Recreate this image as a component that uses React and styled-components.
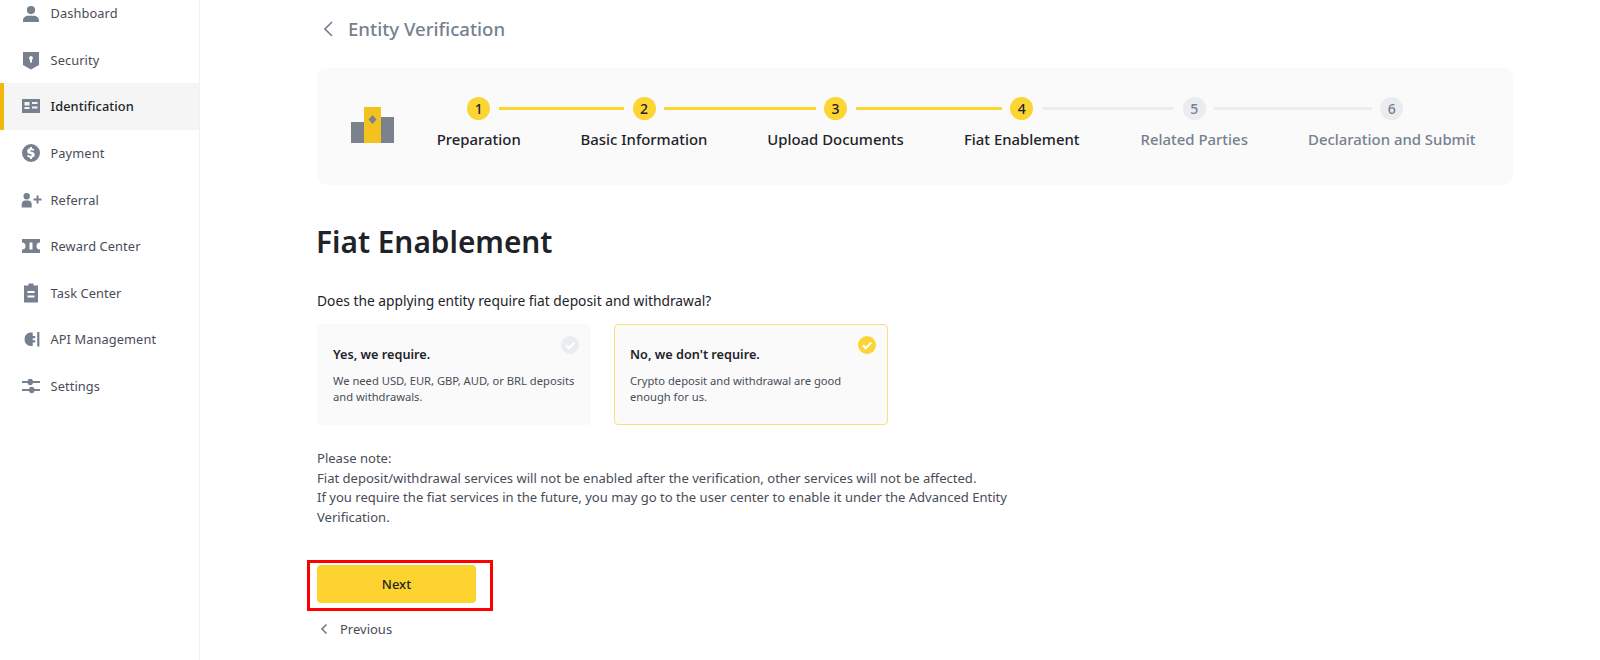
import React from "react";
import styled, { createGlobalStyle } from "styled-components";

const FONT = `"Noto Sans", "Liberation Sans", sans-serif`;

const Global = createGlobalStyle`
  html, body { margin: 0; padding: 0; background: #fff; height: 660px; overflow: hidden; }
  body { font-family: ${FONT}; color: #1e2329; }
  * { box-sizing: border-box; }
`;

const Page = styled.div`
  display: flex;
  width: 1600px;
  height: 660px;
  overflow: hidden;
`;
const Sidebar = styled.nav`
  flex: 0 0 200px;
  height: 660px;
  border-right: 1px solid #f0f1f2;
  overflow: hidden;
`;
const NavList = styled.div`
  margin-top: -10px;
  display: flex;
  flex-direction: column;
`;
const NavItem = styled.div`
  height: 46.6px;
  display: flex;
  align-items: center;
  gap: 7.5px;
  padding-left: ${p => (p.$active ? "15px" : "19px")};
  border-left: ${p => (p.$active ? "4px solid #f0b90b" : "none")};
  background: ${p => (p.$active ? "#f5f5f5" : "transparent")};
  color: ${p => (p.$active ? "#1e2329" : "#474d57")};
  font-size: 12.8px;
  font-weight: ${p => (p.$active ? 500 : 400)};
  letter-spacing: 0.1px;
`;
const NavIcon = styled.svg`
  width: 24px;
  height: 24px;
  flex: none;
  fill: #76808f;
`;
const Main = styled.main`
  flex: 1;
  padding-left: 117px;
  min-width: 0;
`;
const Header = styled.div`
  height: 68px;
  display: flex;
  align-items: flex-start;
  padding-top: 16px;
  gap: 5px;
  color: #76808f;
  font-size: 18.6px;
  font-weight: 500;
  line-height: 26px;
`;
const BackIcon = styled.svg`
  width: ${p => p.$size}px;
  height: ${p => p.$size}px;
  flex: none;
  fill: none;
  stroke: #76808f;
  stroke-width: 1.7;
`;
const Panel = styled.section`
  width: 1196px;
  height: 117px;
  background: #fafafa;
  border-radius: 9px;
  padding: 29px 0 0 34px;
  display: flex;
  align-items: flex-start;
`;
const Logo = styled.svg`
  flex: none;
  width: 43px;
  height: 36px;
  margin: 10px 13px 0 0;
`;
const Steps = styled.div`
  display: grid;
  grid-template-columns: 143.5px 187px 196px 176.5px 168.5px 226.5px;
`;
const Step = styled.div`
  display: flex;
  flex-direction: column;
  align-items: center;
`;
const Track = styled.div`
  width: 100%;
  display: flex;
  align-items: center;
  gap: 8.5px;
`;
const Segment = styled.span`
  flex: 1;
  height: 3px;
  background: ${p => (p.$blank ? "transparent" : p.$on ? "#fcd535" : "#eaecef")};
`;
const Bubble = styled.span`
  flex: none;
  width: 23px;
  height: 23px;
  border-radius: 50%;
  display: flex;
  align-items: center;
  justify-content: center;
  font-size: 14px;
  font-weight: 500;
  background: ${p => (p.$on ? "#fcd535" : "#eaecef")};
  color: ${p => (p.$on ? "#1e2329" : "#76808f")};
`;
const StepLabel = styled.span`
  margin-top: 9px;
  font-size: 14.9px;
  line-height: 20px;
  font-weight: 500;
  white-space: nowrap;
  color: ${p => (p.$on ? "#1e2329" : "#76808f")};
`;
const Title = styled.h1`
  margin: 35px 0 0 -1px;
  font-size: 29.8px;
  line-height: 44px;
  font-weight: 600;
  color: #1e2329;
`;
const Question = styled.p`
  margin: 27px 0 0;
  font-size: 13.8px;
  line-height: 20px;
  color: #1e2329;
`;
const Cards = styled.div`
  margin-top: 13px;
  display: flex;
  gap: 23px;
`;
const Card = styled.div`
  position: relative;
  width: 274px;
  height: 101px;
  padding: 19px 8px 0 15px;
  background: #fafafa;
  border-radius: 4px;
  border: 1px solid ${p => (p.$on ? "#fcdf7a" : "#fafafa")};
`;
const CardTitle = styled.div`
  font-size: 12.7px;
  line-height: 20px;
  font-weight: 600;
  color: #1e2329;
`;
const CardText = styled.div`
  margin-top: 9px;
  font-size: 11.2px;
  line-height: 15.5px;
  color: #474d57;
`;
const CheckBadge = styled.svg`
  position: absolute;
  top: 10.5px;
  right: 11px;
  width: 18px;
  height: 18px;
`;
const Note = styled.div`
  margin-top: 24px;
  width: 690px;
  font-size: 13.05px;
  line-height: 19.7px;
  color: #474d57;
`;
const Annotated = styled.div`
  margin: 32px 0 0 -10px;
  width: 186px;
  height: 51px;
  border: 3px solid #f00;
  padding: 2px 0 0 7px;
`;
const NextButton = styled.button`
  display: block;
  width: 159px;
  height: 38px;
  border: 0;
  border-radius: 4px;
  background: #fdd32f;
  color: #1e2329;
  font: 500 13px ${FONT};
`;
const Previous = styled.div`
  margin-top: 8px;
  display: flex;
  align-items: center;
  gap: 9px;
  height: 20px;
  font-size: 13px;
  color: #474d57;
`;

const nav = [
  ["Dashboard", <path d="M12 5a4 4 0 1 1 0 8.200A4 4 0 0 1 12 5zM4 21v-1.500c0-3 2.500-4.700 5.200-4.700h5.600c2.700 0 5.200 1.700 5.200 4.700V21z" />],
  ["Security", <path fillRule="evenodd" d="M4 4h16v13l-8 4.500L4 17zM12 8a2 2 0 0 0-1 3.700V14.500h2v-2.800A2 2 0 0 0 12 8z" />],
  ["Identification", <path fillRule="evenodd" d="M3 5h18v14H3zM5.500 8v3.500h5V8zM13 8v2h5.500V8zM13 12.500v2h5.500v-2zM5.500 13v2h5v-2z" />],
  ["Payment", <path fillRule="evenodd" d="M12 3a9 9 0 1 1 0 18 9 9 0 0 1 0-18zM11 6v1.300c-1.700.3-2.800 1.400-2.800 2.900 0 1.800 1.300 2.400 3 2.800 1.100.3 1.600.5 1.600 1 0 .5-.5.8-1.300.8-.9 0-1.700-.4-2.400-1l-1.100 1.500c.8.700 1.800 1.200 3 1.300V18h2v-1.400c1.700-.3 2.700-1.400 2.700-2.900 0-1.800-1.200-2.400-3-2.900-1-.3-1.500-.5-1.500-.9s.4-.7 1.100-.7c.7 0 1.400.3 2 .8l1-1.500c-.7-.6-1.400-1-2.300-1.100V6z" />],
  ["Referral", <path d="M7.700 5a3.200 3.200 0 1 1 0 6.400A3.200 3.200 0 0 1 7.700 5zM2.700 19.500v-3.200c0-2.200 1.500-3.800 3.500-3.800h3c2 0 3.500 1.600 3.500 3.800v3.200zM17.500 7.500h2v3h3v2h-3v3h-2v-3h-3v-2h3z" />],
  ["Reward Center", <path fillRule="evenodd" d="M3 5h18v3.500a3.500 3.500 0 0 0 0 7V19H3v-3.500a3.500 3.500 0 0 0 0-7zM10.500 8.500v7h3v-7z" />],
  ["Task Center", <path fillRule="evenodd" d="M9.500 2.500h5v2H19v17H5v-17h4.500zM8.500 10v2h7v-2zM8.500 14.500v2h7v-2z" />],
  ["API Management", <path d="M11 5.500h3V9h2.500v2.200H14v2H16.500v2.200H14V19h-3a7 7 0 0 1 0-13.500zM18.500 5h2.200v14.500h-2.200z" transform="translate(-.3 0)" />],
  ["Settings", <path d="M3 7h5.500a2.800 2.800 0 0 1 5.500 0h7v2h-7a2.800 2.800 0 0 1-5.500 0H3zM3 15h7a2.800 2.800 0 0 1 5.500 0H21v2h-5.500a2.800 2.800 0 0 1-5.500 0H3z" />],
];

const steps = [
  ["Preparation", true],
  ["Basic Information", true],
  ["Upload Documents", true],
  ["Fiat Enablement", true],
  ["Related Parties", false],
  ["Declaration and Submit", false],
];

const Check = ({ on }) => (
  <CheckBadge viewBox="0 0 18 18">
    <circle cx="9" cy="9" r="9" fill={on ? "#fcd535" : "#eaecef"} />
    <path d="M4.800 9.200l3 3 5.500-5.800" fill="none" stroke="#fff" strokeWidth="2.200" />
  </CheckBadge>
);

export default function App() {
  return (
    <Page>
      <Global />
      <Sidebar>
        <NavList>
          {nav.map(([label, icon]) => (
            <NavItem key={label} $active={label === "Identification"}>
              <NavIcon viewBox="0 0 24 24">{icon}</NavIcon>
              {label}
            </NavItem>
          ))}
        </NavList>
      </Sidebar>
      <Main>
        <Header>
          <BackIcon $size={26} viewBox="0 0 26 26"><path d="M15 6L8 13l7 7" /></BackIcon>
          Entity Verification
        </Header>
        <Panel>
          <Logo viewBox="0 0 43 36">
            <rect x="0" y="15" width="14" height="21" fill="#7a828e" />
            <rect x="28" y="10" width="15" height="26" fill="#7a828e" />
            <rect x="13" y="0" width="17" height="36" fill="#f3c21f" />
            <path d="M21.500 8l4 4.500-4 4.500-4-4.500z" fill="#7a828e" />
          </Logo>
          <Steps>
            {steps.map(([label, on], i) => (
              <Step key={label}>
                <Track>
                  <Segment $on={on} $blank={i === 0} />
                  <Bubble $on={on}>{i + 1}</Bubble>
                  <Segment $on={on && steps[i + 1]?.[1]} $blank={i === steps.length - 1} />
                </Track>
                <StepLabel $on={on}>{label}</StepLabel>
              </Step>
            ))}
          </Steps>
        </Panel>
        <Title>Fiat Enablement</Title>
        <Question>Does the applying entity require fiat deposit and withdrawal?</Question>
        <Cards>
          <Card>
            <CardTitle>Yes, we require.</CardTitle>
            <CardText>We need USD, EUR, GBP, AUD, or BRL deposits and withdrawals.</CardText>
            <Check />
          </Card>
          <Card $on>
            <CardTitle>No, we don't require.</CardTitle>
            <CardText>Crypto deposit and withdrawal are good enough for us.</CardText>
            <Check on />
          </Card>
        </Cards>
        <Note>
          Please note:
          <br />
          Fiat deposit/withdrawal services will not be enabled after the verification, other services will not be affected.
          <br />
          If you require the fiat services in the future, you may go to the user center to enable it under the Advanced Entity Verification.
        </Note>
        <Annotated>
          <NextButton>Next</NextButton>
        </Annotated>
        <Previous>
          <BackIcon $size={14} viewBox="0 0 14 14"><path d="M9.500 2.500L5 7l4.500 4.500" /></BackIcon>
          Previous
        </Previous>
      </Main>
    </Page>
  );
}
